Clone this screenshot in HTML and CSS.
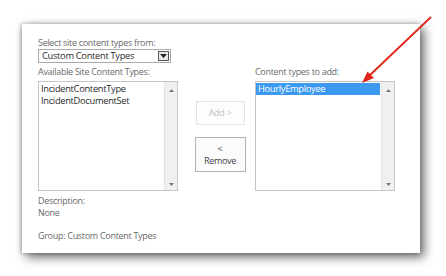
FILE: index.html
```html
<!DOCTYPE html>
<html>
<head>
<meta charset="utf-8">
<link rel="stylesheet" href="styles.css">
</head>
<body>
<div class="stage">
  <div class="panel">
    <div class="label">Select site content types from:</div>
    <div class="select">
      <span class="select-text">Custom Content Types</span>
      <span class="select-btn"><svg width="7" height="4" viewBox="0 0 7 4"><path d="M0 0H7L3.5 4Z" fill="#222"/></svg></span>
    </div>
    <div class="row">
      <div class="col">
        <div class="label">Available Site Content Types:</div>
        <div class="listbox">
          <div class="items">
            <div class="item">IncidentContentType</div>
            <div class="item">IncidentDocumentSet</div>
          </div>
          <div class="scroll">
            <svg width="5" height="3" viewBox="0 0 5 3"><path d="M0 3H5L2.5 0Z" fill="#777"/></svg>
            <svg width="5" height="3" viewBox="0 0 5 3"><path d="M0 0H5L2.5 3Z" fill="#777"/></svg>
          </div>
        </div>
      </div>
      <div class="mid">
        <div class="btn disabled">Add &gt;</div>
        <div class="btn remove"><span class="btn-line">&lt;</span><span class="btn-line">Remove</span></div>
      </div>
      <div class="col">
        <div class="label">Content types to add:</div>
        <div class="listbox">
          <div class="items">
            <div class="item selected">HourlyEmployee</div>
          </div>
          <div class="scroll">
            <svg width="5" height="3" viewBox="0 0 5 3"><path d="M0 3H5L2.5 0Z" fill="#777"/></svg>
            <svg width="5" height="3" viewBox="0 0 5 3"><path d="M0 0H5L2.5 3Z" fill="#777"/></svg>
          </div>
        </div>
      </div>
    </div>
    <div class="desc">
      <div class="label">Description:</div>
      <div class="label">None</div>
    </div>
    <div class="label group">Group: Custom Content Types</div>
  </div>
  <svg class="arrow" width="446" height="276" viewBox="0 0 446 276">
    <line x1="431" y1="17" x2="369" y2="76" stroke="#e2231a" stroke-width="1.8"/>
    <path d="M362 83 L374 78 L367.5 71.5 Z" fill="#e2231a"/>
  </svg>
</div>
</body>
</html>
```

FILE: styles.css
```css
html, body {
  margin: 0;
  padding: 0;
  background: #ffffff;
}
body {
  width: 446px;
  height: 276px;
  overflow: hidden;
  font-family: "Open Sans", "Noto Sans", sans-serif;
  font-size: 9px;
  letter-spacing: -0.3px;
  color: #666;
}
.stage {
  position: relative;
  width: 446px;
  height: 276px;
  padding: 24px 0 0 22px;
  box-sizing: border-box;
}
.panel {
  width: 398px;
  height: 229px;
  box-sizing: border-box;
  background: #fff;
  box-shadow: 4px 4px 10px rgba(0,0,0,0.6), -1px 0 4px rgba(0,0,0,0.3);
  padding: 13px 16px 0 16px;
}
.label {
  line-height: 12px;
  height: 12px;
  white-space: nowrap;
  color: #6a6a6a;
}
.select {
  width: 133px;
  height: 14px;
  box-sizing: border-box;
  border: 1px solid #a9a9a9;
  display: flex;
  align-items: center;
  justify-content: space-between;
  padding: 0 0 0 3px;
  color: #2a2a2a;
}
.select-text {
  font-size: 9.3px;
  line-height: 12px;
}
.select-btn {
  width: 11px;
  height: 10px;
  border: 1px solid #555;
  box-sizing: border-box;
  background: #e8e8e8;
  display: flex;
  align-items: center;
  justify-content: center;
  margin-right: 1px;
}
.row {
  display: flex;
  margin-top: 3px;
}
.col {
  display: flex;
  flex-direction: column;
  gap: 3px;
}
.listbox {
  width: 140px;
  height: 110px;
  box-sizing: border-box;
  border: 1px solid #c6c6c6;
  display: flex;
  background: #fff;
}
.items {
  flex: 1;
  padding-top: 1px;
}
.item {
  font-size: 9.3px;
  line-height: 12px;
  height: 12px;
  color: #2a2a2a;
  padding-left: 2px;
  white-space: nowrap;
}
.item.selected {
  background: #3b99f0;
  color: #fff;
  margin-right: 1px;
}
.scroll {
  width: 12px;
  background: #f0f0f0;
  border-left: 1px solid #e2e2e2;
  display: flex;
  flex-direction: column;
  justify-content: space-between;
  align-items: center;
  padding: 7px 0 4px;
}
.mid {
  width: 77px;
  display: flex;
  flex-direction: column;
  align-items: center;
  padding-left: 7px;
  box-sizing: border-box;
  padding-top: 35px;
  gap: 12px;
}
.btn {
  box-sizing: border-box;
  text-align: center;
  font-size: 9px;
}
.btn.disabled {
  height: 24px;
  width: 49px;
  border: 1px solid #e3e3e3;
  color: #c2c2c2;
  background: #fdfdfd;
  line-height: 22px;
}
.btn.remove {
  height: 35px;
  width: 51px;
  border: 1px solid #b4b4b4;
  background: #fbfbfb;
  color: #444;
  padding-top: 5px;
  display: flex;
  flex-direction: column;
  align-items: center;
}
.btn-line {
  display: block;
  height: 12px;
  line-height: 12px;
}
.desc {
  margin-top: 4px;
}
.group {
  margin-top: 11px;
}
.arrow {
  position: absolute;
  left: 0;
  top: 0;
}
```
